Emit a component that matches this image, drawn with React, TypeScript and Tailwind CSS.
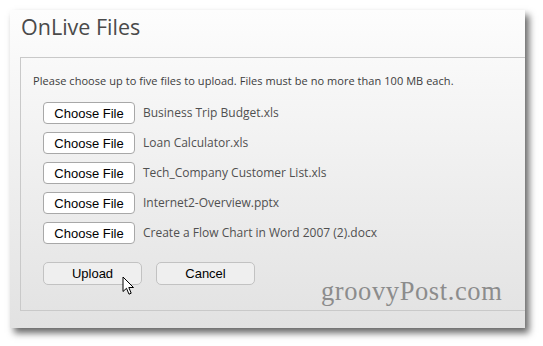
import React from "react";

const files = [
  "Business Trip Budget.xls",
  "Loan Calculator.xls",
  "Tech_Company Customer List.xls",
  "Internet2-Overview.pptx",
  "Create a Flow Chart in Word 2007 (2).docx",
];

const Cursor = () => (
  <svg
    width="13"
    height="20"
    viewBox="0 0 13 20"
    className="absolute left-[89px] top-[14px]"
  >
    <path
      d="M1 1 L1 15.5 L4.5 12.3 L7 18.2 L9.2 17.2 L6.8 11.5 L11.5 11.5 Z"
      fill="#fff"
      stroke="#000"
      strokeWidth="1"
      strokeLinejoin="round"
    />
  </svg>
);

export default function App() {
  return (
    <div className="h-[346px] w-[543px] bg-white pl-[10px] pt-[10px]">
      <div className="relative h-[318px] w-[515px] overflow-hidden bg-gradient-to-b from-[#fdfdfd] to-[#e2e2e2] shadow-[4px_5px_7px_rgba(0,0,0,0.6)]">
        <div className="h-[47px] pl-[11px] pt-[3px] font-['Open_Sans',sans-serif] text-[21.5px] leading-[28px] text-[#4a4a4a]">
          OnLive Files
        </div>
        <div className="ml-[10px] h-[254px] w-[530px] border border-[#c9c9c9] pl-[12px] pt-[15px]">
          <p className="font-['Open_Sans',sans-serif] text-[11px] leading-[16px] tracking-[0.05px] text-[#3c3c3c]">
            Please choose up to five files to upload. Files must be no more than 100 MB each.
          </p>
          <div className="mt-[13px] flex flex-col gap-[8px] pl-[10px]">
            {files.map((f) => (
              <div key={f} className="flex h-[22px] items-center">
                <button className="h-[22px] w-[92px] rounded-[4px] border border-[#a8a8a8] bg-white font-['Liberation_Sans',Arial,sans-serif] text-[13px] leading-none text-black">
                  Choose File
                </button>
                <span className="ml-[8px] font-['Open_Sans',sans-serif] text-[12px] text-[#505050]">
                  {f}
                </span>
              </div>
            ))}
          </div>
          <div className="relative mt-[18px] flex gap-[14px] pl-[10px]">
            <button className="h-[23px] w-[99px] rounded-[5px] border border-[#c2c2c2] bg-[#efefef] font-['Liberation_Sans',Arial,sans-serif] text-[13px] leading-none text-black">
              Upload
            </button>
            <button className="h-[23px] w-[99px] rounded-[5px] border border-[#c2c2c2] bg-[#efefef] font-['Liberation_Sans',Arial,sans-serif] text-[13px] leading-none text-black">
              Cancel
            </button>
            <Cursor />
          </div>
        </div>
        <div className="absolute left-[311px] top-[268px] font-['Liberation_Serif',serif] text-[26.5px] leading-none tracking-[0.6px] text-[#8c8c8c]">
          groovyPost.com
        </div>
      </div>
    </div>
  );
}
